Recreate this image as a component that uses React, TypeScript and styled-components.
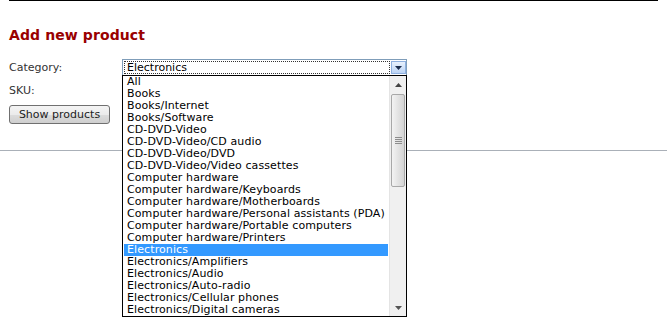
import React from 'react'
import styled, { createGlobalStyle } from 'styled-components'

const categories = [
  'All',
  'Books',
  'Books/Internet',
  'Books/Software',
  'CD-DVD-Video',
  'CD-DVD-Video/CD audio',
  'CD-DVD-Video/DVD',
  'CD-DVD-Video/Video cassettes',
  'Computer hardware',
  'Computer hardware/Keyboards',
  'Computer hardware/Motherboards',
  'Computer hardware/Personal assistants (PDA)',
  'Computer hardware/Portable computers',
  'Computer hardware/Printers',
  'Electronics',
  'Electronics/Amplifiers',
  'Electronics/Audio',
  'Electronics/Auto-radio',
  'Electronics/Cellular phones',
  'Electronics/Digital cameras',
]

const selected = 'Electronics'

const GlobalStyle = createGlobalStyle`
  body {
    margin: 0;
    background: #fff;
    font-family: "DejaVu Sans", Verdana, sans-serif;
    font-size: 11px;
    color: #222;
  }
`

const Page = styled.div`
  width: 667px;
  height: 329px;
  overflow: hidden;
  position: relative;
`

const TopRule = styled.div`
  margin: 0 9px;
  border-top: 1px solid #000;
`

const Content = styled.div`
  padding: 23px 9px 0;
`

const Title = styled.h1`
  margin: 0 0 10px;
  font-size: 14px;
  font-weight: bold;
  color: #990000;
  line-height: 22px;
  letter-spacing: 0.1px;
`

const Form = styled.div`
  display: grid;
  grid-template-columns: 113px 285px;
  grid-auto-rows: 23px;
  align-items: center;
`

const Label = styled.div`
  color: #333;
  line-height: 14px;
`

const SelectWrap = styled.div`
  position: relative;
  height: 17px;
`

const SelectBox = styled.div`
  display: flex;
  height: 17px;
  box-sizing: border-box;
  border: 1px solid #7f9db9;
  background: #fff;
`

const SelectValue = styled.div`
  flex: 1;
  margin: 1px;
  padding-left: 3px;
  line-height: 13px;
  outline: 1px dotted #333;
  outline-offset: -1px;
  color: #000;
`

const ArrowButton = styled.div`
  width: 15px;
  margin: 1px 0;
  box-sizing: border-box;
  border: 1px solid #8eb0e0;
  background: linear-gradient(#e8f1fd, #bcd4f5);
  display: flex;
  align-items: center;
  justify-content: center;
`

const Dropdown = styled.div`
  position: absolute;
  top: 16px;
  left: 0;
  width: 285px;
  height: 242px;
  box-sizing: border-box;
  border: 1px solid #000;
  background: #fff;
  display: flex;
  z-index: 2;
`

const List = styled.div`
  flex: 1;
  padding: 0 1px;
`

const Option = styled.div<{ active?: boolean }>`
  height: 12px;
  line-height: 12px;
  padding-left: 3px;
  white-space: nowrap;
  letter-spacing: 0.1px;
  color: ${(p) => (p.active ? '#fff' : '#000')};
  background: ${(p) => (p.active ? '#3399ff' : 'transparent')};
`

const Scrollbar = styled.div`
  width: 16px;
  background: #f0f0f0;
  border-left: 1px solid #e4e4e4;
  display: flex;
  flex-direction: column;
`

const ScrollButton = styled.div`
  height: 17px;
  display: flex;
  align-items: center;
  justify-content: center;
`

const Thumb = styled.div`
  margin: 1px 1px 0;
  height: 93px;
  box-sizing: border-box;
  border: 1px solid #a8a8a8;
  border-radius: 2px;
  background: linear-gradient(90deg, #f3f3f3, #e0e0e0 60%, #d4d4d4);
  display: flex;
  align-items: center;
  justify-content: center;
`

const Track = styled.div`
  flex: 1;
`

const Button = styled.button`
  grid-column: 1 / span 2;
  justify-self: start;
  margin-top: 2px;
  width: 101px;
  height: 19px;
  padding: 0;
  font-family: "DejaVu Sans", Verdana, sans-serif;
  font-size: 11px;
  color: #222;
  border: 1px solid #707070;
  border-radius: 3px;
  background: linear-gradient(#f4f4f4, #ebebeb 50%, #dcdcdc 51%, #cfcfcf);
`

const Divider = styled.div`
  margin-top: 25px;
  border-top: 1px solid #aab0b8;
`

function Triangle({ down, color = '#000' }: { down?: boolean; color?: string }) {
  return (
    <svg width="7" height="4" viewBox="0 0 7 4">
      <polygon points={down ? '0,0 7,0 3.5,4' : '0,4 7,4 3.5,0'} fill={color} />
    </svg>
  )
}

function Grip() {
  return (
    <svg width="7" height="7" viewBox="0 0 7 7">
      {[0, 2, 4, 6].map((y) => (
        <rect key={y} x="0" y={y} width="7" height="1" fill="#8c8c8c" />
      ))}
    </svg>
  )
}

export default function App() {
  return (
    <Page>
      <GlobalStyle />
      <TopRule />
      <Content>
        <Title>Add new product</Title>
        <Form>
          <Label>Category:</Label>
          <SelectWrap>
            <SelectBox>
              <SelectValue>{selected}</SelectValue>
              <ArrowButton>
                <Triangle down color="#1a2c4c" />
              </ArrowButton>
            </SelectBox>
            <Dropdown>
              <List>
                {categories.map((c) => (
                  <Option key={c} active={c === selected}>
                    {c}
                  </Option>
                ))}
              </List>
              <Scrollbar>
                <ScrollButton>
                  <Triangle color="#444" />
                </ScrollButton>
                <Thumb>
                  <Grip />
                </Thumb>
                <Track />
                <ScrollButton>
                  <Triangle down color="#555" />
                </ScrollButton>
              </Scrollbar>
            </Dropdown>
          </SelectWrap>
          <Label>SKU:</Label>
          <div />
          <Button>Show products</Button>
        </Form>
      </Content>
      <Divider />
    </Page>
  )
}
